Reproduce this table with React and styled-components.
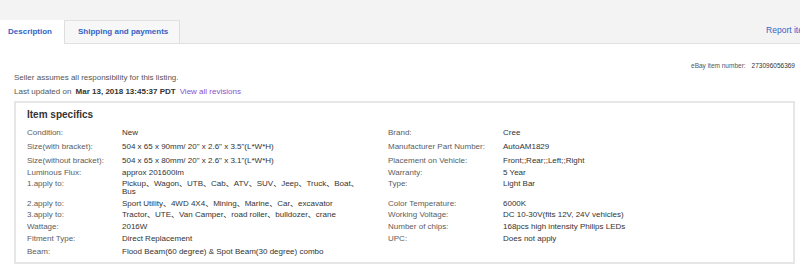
import React from "react";
import styled, { createGlobalStyle } from "styled-components";

const GlobalStyle = createGlobalStyle`
  body {
    margin: 0;
    background: #fff;
    overflow: hidden;
    font-family: "Liberation Sans", Arial, "Noto Sans CJK SC", sans-serif;
  }
`;

const specs = [
  { h: 14, l: ["Condition:", "New"], r: ["Brand:", "Cree"] },
  { h: 14, l: ["Size(with bracket):", "504 x 65 x 90mm/ 20\" x 2.6\" x 3.5\"(L*W*H)"], r: ["Manufacturer Part Number:", "AutoAM1829"] },
  { h: 11.7, l: ["Size(without bracket):", "504 x 65 x 80mm/ 20\" x 2.6\" x 3.1\"(L*W*H)"], r: ["Placement on Vehicle:", "Front;;Rear;;Left;;Right"] },
  { h: 11.6, l: ["Luminous Flux:", "approx 201600lm"], r: ["Warranty:", "5 Year"] },
  { h: 19.4, l: ["1.apply to:", "Pickup、Wagon、UTB、Cab、ATV、SUV、Jeep、Truck、Boat、Bus"], r: ["Type:", "Light Bar"] },
  { h: 11.6, l: ["2.apply to:", "Sport Utility、4WD 4X4、Mining、Marine、Car、excavator"], r: ["Color Temperature:", "6000K"] },
  { h: 11.7, l: ["3.apply to:", "Tractor、UTE、Van Camper、road roller、bulldozer、crane"], r: ["Working Voltage:", "DC 10-30V(fits 12V, 24V vehicles)"] },
  { h: 11.7, l: ["Wattage:", "2016W"], r: ["Number of chips:", "168pcs high intensity Philips LEDs"] },
  { h: 13.3, l: ["Fitment Type:", "Direct Replacement"], r: ["UPC:", "Does not apply"] },
  { h: 8, l: ["Beam:", "Flood Beam(60 degree) & Spot Beam(30 degree) combo"], r: null },
];

export default function App() {
  return (
    <>
      <GlobalStyle />
      <TabBar>
        <Tab active>Description</Tab>
        <Tab>Shipping and payments</Tab>
        <ReportLink href="#">Report item</ReportLink>
      </TabBar>
      <Main>
        <ItemNumber>
          <span>eBay item number:</span>
          <strong>273096056369</strong>
        </ItemNumber>
        <Note>Seller assumes all responsibility for this listing.</Note>
        <Note>
          Last updated on <Stamp>Mar 13, 2018 13:45:37 PDT</Stamp>
          <Revisions href="#">View all revisions</Revisions>
        </Note>
        <SpecBox>
          <Title>Item specifics</Title>
          {specs.map((row, i) => (
            <Row key={i} h={row.h}>
              <Label>{row.l[0]}</Label>
              <Value wrap>{row.l[1]}</Value>
              <Label>{row.r ? row.r[0] : ""}</Label>
              <Value>{row.r ? row.r[1] : ""}</Value>
            </Row>
          ))}
        </SpecBox>
      </Main>
    </>
  );
}

const TabBar = styled.div`
  display: flex;
  align-items: flex-end;
  height: 44px;
  box-sizing: border-box;
  padding-top: 20px;
  background: #f3f3f3;
  border-bottom: 1px solid #e1e1e1;
`;

const Tab = styled.div`
  position: relative;
  height: 24px;
  margin-bottom: -1px;
  box-sizing: border-box;
  display: flex;
  align-items: center;
  padding: ${(p) => (p.active ? "0 12px 1px 8px" : "0 11px 2px 13px")};
  background: ${(p) => (p.active ? "#fff" : "#f7f7f7")};
  border-right: 1px solid #dedede;
  border-top: ${(p) => (p.active ? "none" : "1px solid #e2e2e2")};
  border-bottom: ${(p) => (p.active ? "none" : "1px solid #e1e1e1")};
  color: #3463c6;
  font-size: 8px;
  font-weight: bold;
  white-space: nowrap;
`;

/* the link runs past the right edge of the bar */
const ReportLink = styled.a`
  margin-left: auto;
  margin-right: -10px;
  align-self: center;
  margin-bottom: 4px;
  color: #3463c6;
  font-size: 8.5px;
  text-decoration: none;
  white-space: nowrap;
`;

const Main = styled.div`
  padding: 0 5px 0 14px;
`;

const ItemNumber = styled.div`
  display: flex;
  justify-content: flex-end;
  gap: 6px;
  margin-top: 17px;
  height: 10px;
  line-height: 10px;
  font-size: 6.5px;
  color: #555;

  strong {
    font-weight: normal;
    color: #333;
  }
`;

const Note = styled.div`
  height: 14px;
  line-height: 14px;
  font-size: 8px;
  color: #555;
  white-space: nowrap;
`;

const Stamp = styled.b`
  color: #333;
  margin: 0 2px 0 2px;
`;

const Revisions = styled.a`
  margin-left: 2px;
  color: #8a4fcc;
  text-decoration: none;
`;

const SpecBox = styled.div`
  margin-top: 2px;
  border: 2px solid #e6e6e6;
  padding: 5px 11px 6px;
`;

const Title = styled.div`
  height: 14px;
  line-height: 14px;
  margin-bottom: 7px;
  font-size: 10px;
  font-weight: bold;
  color: #333;
`;

const Row = styled.div`
  display: grid;
  grid-template-columns: 95px 266px 115px 1fr;
  height: ${(p) => p.h}px;
  font-size: 8px;
  line-height: 8px;
`;

const Label = styled.div`
  color: #5c5c5c;
  white-space: nowrap;
`;

const Value = styled.div`
  color: #333;
  padding-right: ${(p) => (p.wrap ? "24px" : "0")};
`;
